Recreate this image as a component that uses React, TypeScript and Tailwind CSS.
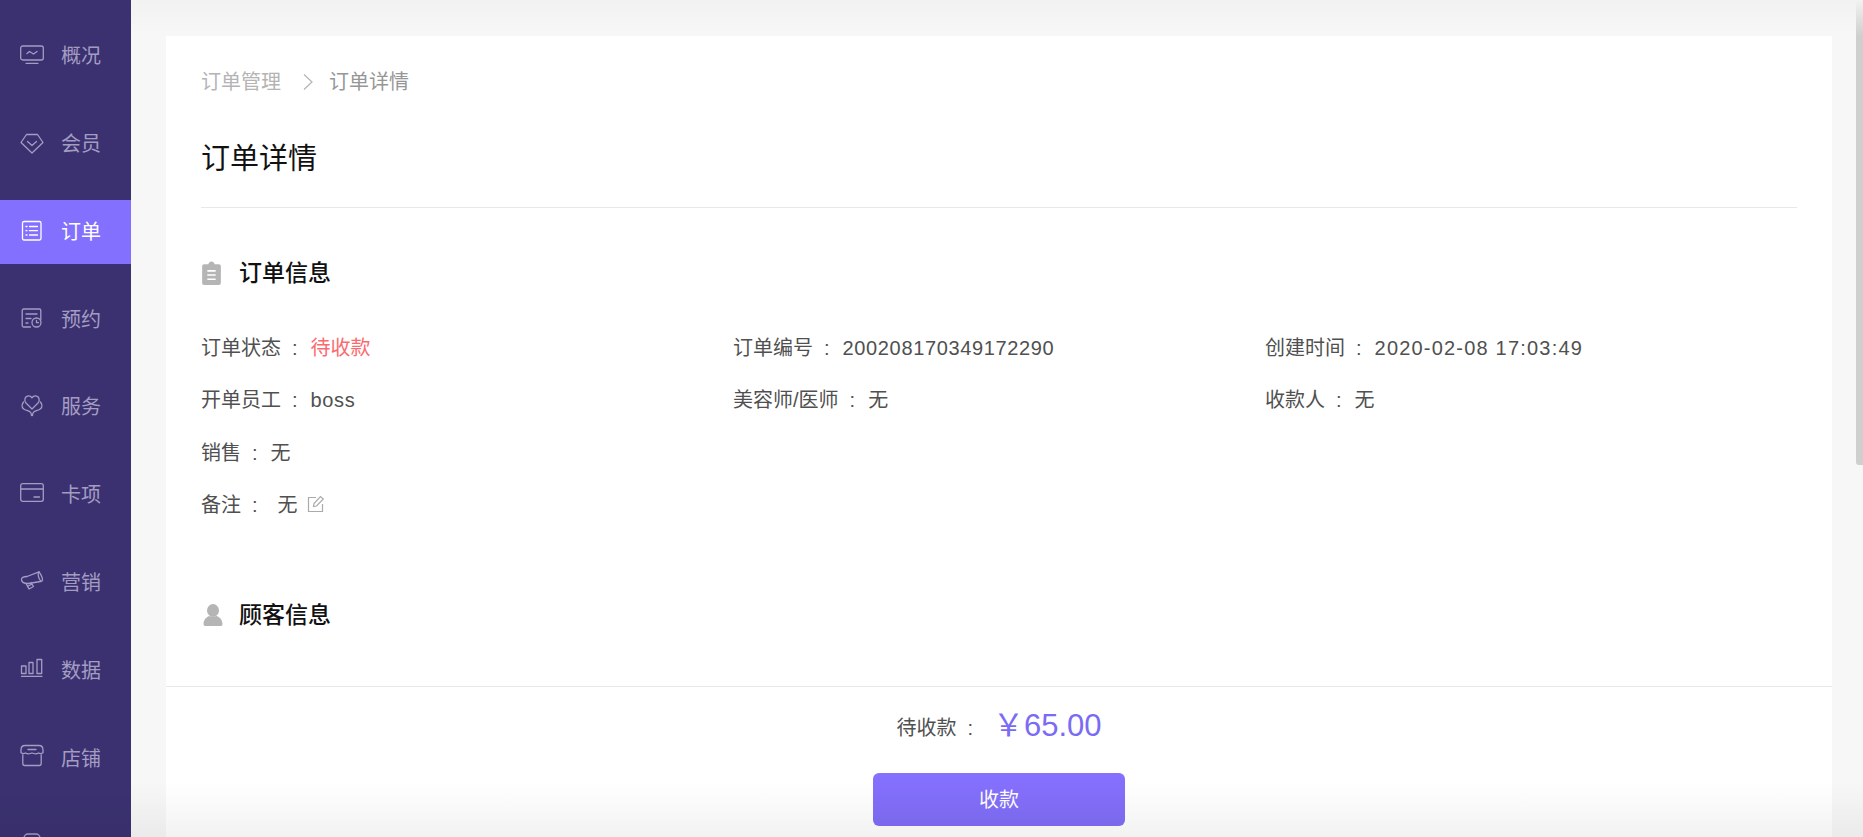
import React from "react";

const font = { fontFamily: '"Liberation Sans","Noto Sans CJK SC",sans-serif' };

const S = ({ children }: { children: React.ReactNode }) => (
  <svg viewBox="0 0 24 24" fill="none" stroke="currentColor" strokeWidth="1.3" strokeLinecap="round" strokeLinejoin="round" className="w-6 h-6 shrink-0 overflow-visible">
    {children}
  </svg>
);

const icons: Record<string, React.ReactNode> = {
  monitor: (
    <S>
      <rect x="0.700" y="2" width="22.600" height="14" rx="2" />
      <path d="M7 9.500l2.500-2L13.500 10l3.500-2.500" />
      <path d="M6 19.300h12" />
    </S>
  ),
  gem: (
    <S>
      <path d="M6.500 2.500h11L23 10.500 12 21 1 10.500z" />
      <path d="M7.500 9.500L12 13.500l4.500-4" />
    </S>
  ),
  list: (
    <S>
      <rect x="2.500" y="1.500" width="18.500" height="18.500" rx="1.500" />
      <path d="M6 6.500h1M9.500 6.500h8M6 10.700h1M9.500 10.700h8M6 15h1M9.500 15h8" />
    </S>
  ),
  appt: (
    <S>
      <path d="M10.500 19H3.700a1.500 1.500 0 0 1-1.500-1.500v-15A1.500 1.500 0 0 1 3.700 1h15.600a1.500 1.500 0 0 1 1.500 1.500v9" />
      <path d="M6 6h11M6 10.500h5M6 15h2" />
      <circle cx="16.500" cy="14.500" r="4.500" />
      <path d="M16.500 12.300v2.400h2" />
    </S>
  ),
  heart: (
    <S>
      <path d="M12 14L6 8C3.500 5 5.200 .8 8.800 .8c1.500 0 2.500.8 3.200 2 .7-1.200 1.700-2 3.200-2C18.800 .8 20.500 5 18 8z" />
      <path d="M3.500 7C1 10.500 2 13 4.500 14.500c2 1 4 1 5.500 2.300 1 .8 1.500 2 1.500 3.700M20.500 7c2.500 3.500 1.500 6-1 7.500-2 1-4 1-5.500 2.300-1 .8-1.500 2-1.500 3.700" />
    </S>
  ),
  card: (
    <S>
      <rect x="0.700" y="0.700" width="22.600" height="17.600" rx="2" />
      <path d="M0.700 6h22.600M14 14h5.500" />
    </S>
  ),
  horn: (
    <S>
      <path d="M7 5.500L19 .8c1.500 2 3.500 5.500 3.500 8.200 0 1.500-.8 1.500-2 1.500L8.500 12.500" />
      <path d="M7 5.500C3.500 5.500 1 6.800 1.500 9c.4 2 3 3.700 7 3.500" />
      <path d="M19 .8c-1.500 1-1 6.500 2 9.500" />
      <path d="M6 12.500l3 5.500 4.500-2.500-2.500-4M7.500 15.500l4.500-2.500" />
    </S>
  ),
  bars: (
    <S>
      <rect x="1.500" y="7" width="4.500" height="7.500" />
      <rect x="9" y="3.500" width="4" height="11" />
      <rect x="17" y="0.500" width="4.700" height="14" />
      <path d="M1.500 17.300h20.500" />
    </S>
  ),
  store: (
    <S>
      <path d="M5 -1.500h14c2.500 0 4 2 4 4.500v2.700c-1.500 1-3 1.300-4.500.3-2 1.200-4 1-6.500 0-2.500 1-4.500 1.200-6.500 0-1.500 1-3 .7-4.500-.3V3c0-2.500 1.500-4.500 4-4.500z" />
      <path d="M8 2.500h8" />
      <path d="M2.800 8v8.500a2 2 0 0 0 2 2h14.400a2 2 0 0 0 2-2V8" />
    </S>
  ),
  me: (
    <S>
      <rect x="4" y="-1" width="16" height="14" rx="4" />
    </S>
  ),
};

const nav = [
  ["monitor", "概况"],
  ["gem", "会员"],
  ["list", "订单"],
  ["appt", "预约"],
  ["heart", "服务"],
  ["card", "卡项"],
  ["horn", "营销"],
  ["bars", "数据"],
  ["store", "店铺"],
  ["me", ""],
];

const Field = ({ label, value, valueClass = "", extra }: { label: string; value: string; valueClass?: string; extra?: React.ReactNode }) => (
  <div className="flex items-center h-6 text-[20px] text-[#505050] whitespace-nowrap">
    <span>{label}</span>
    <span className="ml-[11px] mr-[13px]">:</span>
    <span className={valueClass}>{value}</span>
    {extra}
  </div>
);

const SectionTitle = ({ icon, children, className }: { icon: React.ReactNode; children: React.ReactNode; className: string }) => (
  <div className={"flex items-center h-[30px] " + className}>
    <span className="w-[38px] shrink-0 flex items-center">{icon}</span>
    <span className="text-[23px] font-medium text-[#111]">{children}</span>
  </div>
);

export default function App() {
  return (
    <div className="relative flex h-screen w-full overflow-hidden bg-[#f7f7f7]" style={font}>
      <aside className="w-[131px] shrink-0 bg-[#3b3171] pt-6 flex flex-col gap-[23.850px] overflow-hidden">
        {nav.map(([ic, t], i) => (
          <div
            key={ic}
            className={
              "flex items-center h-16 shrink-0 pl-5 gap-[17px] text-[20px] " +
              (i === 2 ? "bg-[#8470ff] text-white" : "text-[#a39dc2]")
            }
          >
            {icons[ic]}
            {t ? <span>{t}</span> : null}
          </div>
        ))}
      </aside>

      <main className="flex-1 min-w-0 pt-9 pl-[35px] pr-[31px] flex">
        <section className="flex-1 bg-white flex flex-col min-w-0">
          <div className="flex-1 min-h-0 overflow-hidden pl-[35px] pr-[35px] pt-8">
            <div className="flex items-center h-7 text-[20px]">
              <span className="text-[#b4b4b4]">订单管理</span>
              <svg viewBox="0 0 12 18" fill="none" stroke="#b4b4b4" strokeWidth="1.200" className="w-3 h-[18px] ml-[21px] mr-[15px]">
                <path d="M2 1.500L10 9 2 16.500" />
              </svg>
              <span className="text-[#969696]">订单详情</span>
            </div>
            <h1 className="mt-[43px] h-10 leading-10 text-[29px] font-normal text-[#111]">订单详情</h1>
            <div className="mt-[28px] border-t border-[#e8e8e8]" />

            <SectionTitle
              className="mt-[50px]"
              icon={
                <svg viewBox="0 0 20 24" className="w-[21px] h-[25px]" fill="#b5b5b5">
                  <path d="M3 3h4c.5-1.500 1.500-2.500 3-2.500S12.500 1.500 13 3h4a2 2 0 0 1 2 2v16a2 2 0 0 1-2 2H3a2 2 0 0 1-2-2V5a2 2 0 0 1 2-2z" />
                  <path d="M6 9.500h8M6 13.500h8M6 17.500h8" stroke="#fff" strokeWidth="1.500" />
                </svg>
              }
            >
              订单信息
            </SectionTitle>

            <div className="mt-[48px] grid grid-cols-3 gap-y-[28.300px]">
              <Field label="订单状态" value="待收款" valueClass="text-[#fa6a70]" />
              <Field label="订单编号" value="200208170349172290" valueClass="tracking-[0.640px]" />
              <Field label="创建时间" value="2020-02-08 17:03:49" valueClass="tracking-[1.200px]" />
              <Field label="开单员工" value="boss" valueClass="tracking-[0.640px]" />
              <Field label="美容师/医师" value="无" />
              <Field label="收款人" value="无" />
              <Field label="销售" value="无" />
              <div />
              <div />
              <Field
                label="备注"
                value="无"
                valueClass="pl-[7px]"
                extra={
                  <svg viewBox="0 0 18 18" fill="none" stroke="#aaa" strokeWidth="1.200" className="w-[18px] h-[18px] ml-[9px] -mt-[1px]">
                    <path d="M9 2.500H1.500v14h14V9" />
                    <path d="M6.500 11.500l.5-3L13.500 1.500l2.800 2.500-6.800 7z" />
                  </svg>
                }
              />
            </div>

            <SectionTitle
              className="mt-[83px]"
              icon={
                <svg viewBox="0 0 24 24" className="w-6 h-6" fill="#b5b5b5">
                  <ellipse cx="12" cy="7.500" rx="6" ry="6.500" />
                  <path d="M2.500 21c0-5 4-7.500 6-8 1 1 5.500 1 7 0 2 .5 6 3 6 8 0 1.500-1 2-2 2H4.500c-1 0-2-.5-2-2z" />
                </svg>
              }
            >
              顾客信息
            </SectionTitle>
          </div>

          <div className="h-[151px] shrink-0 border-t border-[#e8e8e8] flex flex-col items-center">
            <div className="mt-[20px] h-[38px] flex items-center justify-center whitespace-nowrap">
              <span className="text-[20px] text-[#505050] mt-[4px]">待收款</span>
              <span className="text-[20px] text-[#505050] ml-[11px] mr-[20px] mt-[4px]">:</span>
              <span className="text-[31px] text-[#7a6bf5]">￥65.00</span>
            </div>
            <button className="mt-[28px] w-[252px] h-[53px] rounded-[6px] bg-gradient-to-b from-[#8570ff] to-[#7f6df5] text-white text-[20px]">
              收款
            </button>
          </div>
        </section>
      </main>

      <div className="pointer-events-none absolute top-[1px] right-0 w-[7px] h-[464px] bg-[#cfcfcf] rounded-bl-[3px]" />
      <div className="pointer-events-none absolute top-0 left-[131px] right-0 h-9 bg-gradient-to-b from-[#f2f2f2] to-transparent" />
      <div className="pointer-events-none absolute bottom-0 left-0 right-0 h-[55px] bg-gradient-to-b from-transparent to-[rgba(0,0,0,0.05)]" />
    </div>
  );
}
